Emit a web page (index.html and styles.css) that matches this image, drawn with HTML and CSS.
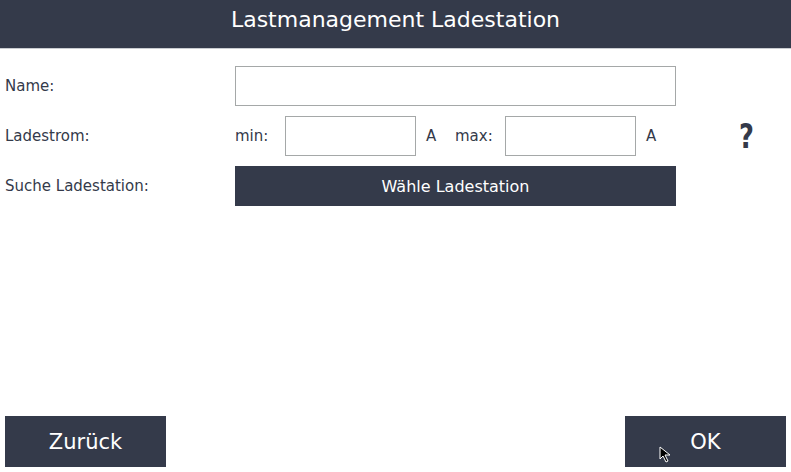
FILE: index.html
```html
<!DOCTYPE html>
<html lang="de">
<head>
    <meta charset="UTF-8">
    <title>Lastmanagement Ladestation</title>
    <link rel="stylesheet" href="styles.css">
</head>
<body>

    <div class="header">Lastmanagement Ladestation</div>

    <div class="form">
        <label class="label" for="name">Name:</label>
        <input class="field" type="text" id="name">
        <div></div>

        <span class="label">Ladestrom:</span>
        <div class="current-row">
            <span class="sub-label">min:</span>
            <input class="field small" type="text" id="min">
            <span class="unit">A</span>
            <span class="sub-label">max:</span>
            <input class="field small" type="text" id="max">
            <span class="unit">A</span>
        </div>
        <div class="help"><span class="help-mark">?</span></div>

        <span class="label">Suche Ladestation:</span>
        <button class="select-btn">Wähle Ladestation</button>
        <div></div>
    </div>

    <div class="footer">
        <button class="nav-btn">Zurück</button>
        <button class="nav-btn">OK</button>
    </div>

    <svg class="cursor" width="14" height="18" viewBox="0 0 14 18">
        <path d="M1 1 L1 13 L4 10 L7 16 L9 15 L6 9 L11 9 Z" fill="#000" stroke="#fff" stroke-width="1"/>
    </svg>

</body>
</html>
```

FILE: styles.css
```css
body {
    font-family: 'DejaVu Sans', sans-serif;
    background-color: white;
    color: #343a4a;
    margin: 0;
    height: 100vh;
    display: flex;
    flex-direction: column;
    position: relative;
    overflow: hidden;
}

.header {
    height: 48px;
    flex-shrink: 0;
    padding-bottom: 0;
    background-color: #343a4a;
    border-bottom: 1px solid #c9ccd1;
    color: white;
    font-size: 22px;
    line-height: 40px;
    text-align: center;
}

.form {
    display: grid;
    grid-template-columns: 230px 441px 1fr;
    grid-auto-rows: 40px;
    row-gap: 10px;
    align-items: center;
    padding: 17px 0 0 5px;
}

.label {
    font-size: 15px;
}

.field {
    height: 40px;
    box-sizing: border-box;
    border: 1px solid #a5a8a8;
    margin: 0;
    padding: 0 6px;
    font-family: 'DejaVu Sans', sans-serif;
    font-size: 15px;
    color: #343a4a;
    outline: none;
}

.current-row {
    display: flex;
    align-items: center;
    font-size: 15px;
}

.sub-label {
    width: 50px;
}

.field.small {
    width: 131px;
}

.unit {
    margin-left: 10px;
    width: 29px;
}

.help {
    padding-left: 61px;
    height: 40px;
    display: flex;
    align-items: center;
}

.help-mark {
    display: inline-block;
    font-size: 33px;
    line-height: 1;
    font-weight: bold;
    transform: scaleX(0.78);
}

.select-btn {
    height: 40px;
    border: none;
    background-color: #343a4a;
    color: white;
    font-family: 'DejaVu Sans', sans-serif;
    font-size: 16px;
    cursor: pointer;
}

.footer {
    margin-top: auto;
    display: flex;
    justify-content: space-between;
    padding: 0 5px 5px 5px;
}

.nav-btn {
    width: 161px;
    height: 51px;
    border: none;
    background-color: #343a4a;
    color: white;
    font-family: 'DejaVu Sans', sans-serif;
    font-size: 21px;
    cursor: pointer;
}

.cursor {
    position: absolute;
    left: 659px;
    top: 446px;
}
```
